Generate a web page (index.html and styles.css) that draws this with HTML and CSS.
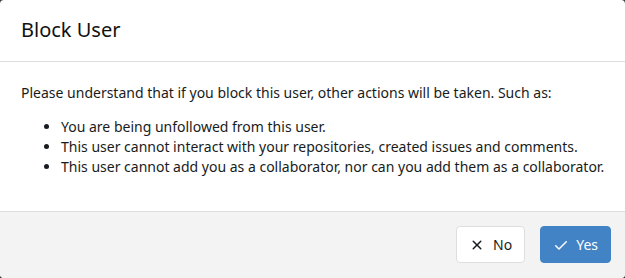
FILE: index.html
```html
<!DOCTYPE html>
<html lang="en">
<head>
    <meta charset="UTF-8">
    <meta name="viewport" content="width=device-width, initial-scale=1.0">
    <title>Block User</title>
    <link rel="stylesheet" href="styles.css">
</head>
<body>
    <div class="modal">
        <div class="header">Block User</div>

        <div class="content">
            <p>Please understand that if you block this user, other actions will be taken. Such as:</p>
            <ul>
                <li>You are being unfollowed from this user.</li>
                <li>This user cannot interact with your repositories, created issues and comments.</li>
                <li>This user cannot add you as a collaborator, nor can you add them as a collaborator.</li>
            </ul>
        </div>

        <div class="actions">
            <button class="button cancel">
                <svg viewBox="0 0 16 16" width="16" height="16"><path d="M3.72 3.72a.75.75 0 0 1 1.06 0L8 6.94l3.22-3.22a.75.75 0 1 1 1.06 1.06L9.06 8l3.220 3.22a.75.75 0 1 1-1.06 1.06L8 9.06l-3.22 3.22a.75.75 0 0 1-1.06-1.06L6.94 8 3.72 4.78a.75.75 0 0 1 0-1.06Z"/></svg>
                No
            </button>
            <button class="button primary">
                <svg viewBox="0 0 16 16" width="16" height="16"><path d="M13.78 4.22a.75.75 0 0 1 0 1.06l-7.25 7.25a.75.75 0 0 1-1.06 0L2.22 9.28a.75.75 0 0 1 1.06-1.06L6 10.94l6.72-6.72a.75.75 0 0 1 1.06 0Z"/></svg>
                Yes
            </button>
        </div>
    </div>
</body>
</html>
```

FILE: styles.css
```css
body {
    margin: 0;
    background-color: #3b3b3b;
    font-family: 'Noto Sans', sans-serif;
    font-size: 14px;
    line-height: 20px;
    color: #181c21;
}

.modal {
    height: 100vh;
    background-color: #ffffff;
    border-radius: 4px;
    overflow: hidden;
    display: flex;
    flex-direction: column;
}

.header {
    height: 62px;
    box-sizing: border-box;
    padding: 16px 21px 0;
    border-bottom: 1px solid #dedede;
    font-size: 20px;
    line-height: 27px;
    color: #111;
}

.content {
    flex: 1;
    padding: 21px 10px 0 21px;
}

.content p {
    margin: 0 0 14px;
}

.content ul {
    margin: 0;
    padding-left: 40px;
}

.content li {
    white-space: nowrap;
}

.actions {
    display: flex;
    justify-content: flex-end;
    gap: 15px;
    padding: 14px 14px 15px;
    background-color: #f3f3f3;
    border-top: 1px solid #dedede;
}

.button {
    display: flex;
    align-items: center;
    gap: 8px;
    height: 37px;
    padding: 0 12px;
    border-radius: 4px;
    font-family: inherit;
    font-size: 14px;
    cursor: pointer;
}

.button svg {
    fill: currentColor;
}

.button.cancel {
    background-color: #ffffff;
    border: 1px solid #dedede;
    color: #181c21;
}

.button.primary {
    gap: 7px;
    background-color: #4183c4;
    border: 1px solid #4183c4;
    color: #ffffff;
}
```
